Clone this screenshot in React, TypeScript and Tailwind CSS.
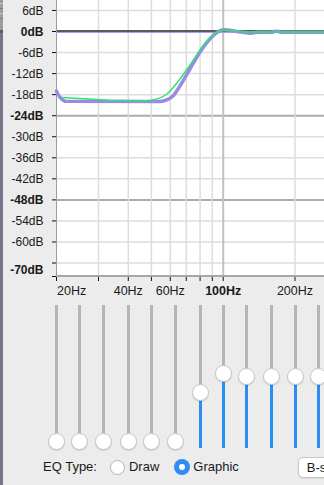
import React from 'react';

// frequency -> x on the page (log scale, 20Hz at the plot's left edge)
const fx = (f: number) => 56.5 + 238.5 * Math.log10(f / 20);
// dB -> y on the page
const dy = (db: number) => 31.5 - db * 3.508;

const dbLevels = [6, 0, -6, -12, -18, -24, -30, -36, -42, -48, -54, -60, -66];
const gridFreqs = [30, 40, 50, 60, 70, 80, 90, 100, 200, 300];

const sliders = [
    { f: 20, c: 141.7 },
    { f: 25, c: 141.7 },
    { f: 31.5, c: 141.7 },
    { f: 40, c: 141.7 },
    { f: 50, c: 141.7 },
    { f: 63, c: 141.7 },
    { f: 80, c: 92 },
    { f: 100, c: 73 },
    { f: 125, c: 76 },
    { f: 160, c: 76 },
    { f: 200, c: 76 },
    { f: 250, c: 76 },
];

const Chart: React.FC = () => (
    <svg width={321} height={300} viewBox="3 0 321 300" className="block shrink-0" style={{ fontFamily: '"Liberation Sans", Arial, sans-serif' }}>
        <rect x={56} y={0} width={270} height={276} fill="#ffffff" />
        {/* horizontal grid */}
        {dbLevels.map((db) => {
            const y = dy(db);
            let stroke = '#dddddd';
            let w = 1.5;
            if (db === -24 || db === -48) {
                stroke = '#acacac';
                w = 2;
            }
            if (db === 0) return null;
            return <line key={db} x1={56} x2={324} y1={y} y2={y} stroke={stroke} strokeWidth={w} />;
        })}
        {/* vertical grid */}
        {gridFreqs.map((f) => (
            <line key={f} x1={fx(f)} x2={fx(f)} y1={0} y2={276} stroke={f === 100 ? '#c2c2c2' : '#dddddd'} strokeWidth={f === 100 ? 2 : 1.5} />
        ))}
        {/* 0dB line */}
        <line x1={56} x2={324} y1={31} y2={31} stroke="#5a5a5a" strokeWidth={2} />
        <line x1={56} x2={324} y1={32.5} y2={32.5} stroke="#a99df0" strokeWidth={1} />
        {/* axes */}
        <line x1={56.5} x2={56.5} y1={0} y2={277} stroke="#9c9c9c" strokeWidth={1} />
        <line x1={56} x2={324} y1={276} y2={276} stroke="#a6a6a6" strokeWidth={2} />
        {/* left ticks */}
        {[...dbLevels, -70].map((db) => {
            const y = db === -70 ? 276.5 : dy(db);
            return <line key={db} x1={52} x2={56} y1={y} y2={y} stroke="#111" strokeWidth={1} />;
        })}
        {/* bottom ticks */}
        {[20, ...gridFreqs].map((f) => (
            <line key={f} x1={fx(f)} x2={fx(f)} y1={277} y2={281} stroke="#111" strokeWidth={1} />
        ))}
        {/* dB labels */}
        {dbLevels
            .filter((db) => db !== -66)
            .map((db) => (
                <text
                    key={db}
                    x={43.5}
                    y={dy(db) + 4.3}
                    textAnchor="end"
                    fontSize={12}
                    fontWeight={db === 0 || db === -24 || db === -48 ? 700 : 400}
                    fill="#1a1a1a"
                >
                    {db}dB
                </text>
            ))}
        <text x={43.5} y={274.3} textAnchor="end" fontSize={12} fontWeight={700} fill="#1a1a1a">
            -70dB
        </text>
        {/* Hz labels */}
        <text x={57} y={295} fontSize={12.5} fill="#1a1a1a">20Hz</text>
        <text x={fx(40)} y={295} textAnchor="middle" fontSize={12.5} fill="#1a1a1a">40Hz</text>
        <text x={fx(60)} y={295} textAnchor="middle" fontSize={12.5} fill="#1a1a1a">60Hz</text>
        <text x={fx(100)} y={295} textAnchor="middle" fontSize={12.5} fontWeight={700} fill="#1a1a1a">100Hz</text>
        <text x={fx(200)} y={295} textAnchor="middle" fontSize={12.5} fill="#1a1a1a">200Hz</text>
        {/* curves */}
        <path
            d="M56.5,91 C58,95 60,99 65,101.3 L158,101.6 C164,101.6 168,100.5 173,96 C180,88 191,66 200,52 C208,40 215,32 222,30 C226,29 232,31 240,32 C246,32 248,34 252,33 C256,32 258,32 262,32.3 L272,32.3 C275,31 278,31 281,32.3 L324,32.3"
            fill="none"
            stroke="#978ae8"
            strokeWidth={3.5}
            strokeLinejoin="round"
            strokeLinecap="round"
        />
        <path
            d="M62,97.5 L110,100.3 L146,100.7 C154,100.5 161,98.5 167,94 C176,86 189,67 200,50 C208,38 215,31 224,30 C230,30 236,32 244,32 L324,32"
            fill="none"
            stroke="#2fe36a"
            strokeWidth={1.4}
        />
    </svg>
);

const Slider: React.FC<{ f: number; c: number }> = ({ f, c }) => {
    const left = fx(f) - 3 - 8.5;
    const grayH = c - 5;
    const blueH = 148 - c;
    const atMin = c > 140;
    return (
        <div className="absolute top-0 h-full w-[17px]" style={{ left }}>
            <div className="absolute left-[7px] top-[5px] w-[3px] bg-[#b5b5b5]" style={{ height: grayH }} />
            {!atMin && <div className="absolute left-[7px] w-[3px] bg-[#2b8cf1]" style={{ top: c, height: blueH }} />}
            <div
                className="absolute left-0 h-[17px] w-[17px] rounded-full border border-[#c6c6c6] bg-white shadow-[0_1px_1px_rgba(0,0,0,0.12)]"
                style={{ top: c - 8.5 }}
            />
        </div>
    );
};

export default function App() {
    return (
        <div className="flex h-[485px] w-[324px] overflow-hidden bg-[#ececec] text-[#1a1a1a]" style={{ fontFamily: '"Liberation Sans", Arial, sans-serif' }}>
            {/* sliver of the window behind */}
            <div className="flex w-[3px] shrink-0 flex-col">
                <div className="flex h-[30px] flex-col gap-[4px] bg-[#9d9d9f] pt-[3px]">
                    <div className="h-px bg-[#c4c4c4]" />
                    <div className="h-px bg-[#7e7e80]" />
                    <div className="h-px bg-[#c4c4c4]" />
                    <div className="h-px bg-[#7e7e80]" />
                </div>
                <div className="h-[3px] bg-[#5f5c68]" />
                <div className="flex-1 bg-[#7a768a]" />
            </div>

            <div className="flex min-w-0 flex-1 flex-col">
                <Chart />

                {/* graphic EQ sliders */}
                <div className="relative h-[152px] shrink-0">
                    {sliders.map((s) => (
                        <Slider key={s.f} f={s.f} c={s.c} />
                    ))}
                </div>

                {/* EQ type row */}
                <div className="flex h-[30px] shrink-0 items-center pl-[40px] text-[13px]">
                    <span className="shrink-0">EQ Type:</span>
                    <div className="ml-[13px] h-[15px] w-[15px] shrink-0 rounded-full border border-[#b3b3b3] bg-white" />
                    <span className="ml-[4px] shrink-0">Draw</span>
                    <div className="ml-[15px] flex h-[16px] w-[16px] shrink-0 items-center justify-center rounded-full bg-[#2f8cf2]">
                        <div className="h-[6px] w-[6px] rounded-full bg-white" />
                    </div>
                    <span className="ml-[3px] shrink-0">Graphic</span>
                    <button className="ml-[59px] h-[21px] w-[80px] shrink-0 rounded-[5px] border border-[#c6c6c6] bg-white pl-[8px] text-left text-[13px] shadow-[0_1px_1px_rgba(0,0,0,0.08)]">
                        B-spline
                    </button>
                </div>
            </div>
        </div>
    );
}
